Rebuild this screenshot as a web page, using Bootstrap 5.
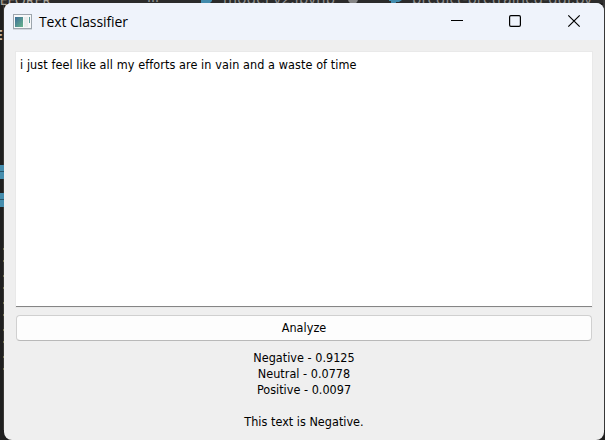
<!DOCTYPE html>
<html lang="en">
<head>
<meta charset="utf-8">
<title>Text Classifier</title>
<link href="https://cdn.jsdelivr.net/npm/bootstrap@5.3.0/dist/css/bootstrap.min.css" rel="stylesheet">
<style>
html,body{height:440px;overflow:hidden}
body{background:#1f1f1f;font-family:"DejaVu Sans Condensed","DejaVu Sans",sans-serif;font-stretch:condensed;font-size:12.5px;line-height:16px;color:#000}
.desk{height:440px;padding:3px 1px 0 4px}
.behind{inset:0;font-family:"Noto Sans",sans-serif;font-stretch:normal}
.behind svg{display:block}
.app-window{height:437px;background:#efefef;border-radius:8px}
.titlebar{height:37px;background:#eff3fb;padding-left:9px}
.title-text{font-family:"Open Sans","Noto Sans",sans-serif;font-stretch:normal;font-size:14px;line-height:20px;margin-left:7px;letter-spacing:-.1px}
.content-area{padding:12px 12px 0}
.entry{height:255px;background:#fff;box-shadow:0 0 0 1px #e9e9e9;border-bottom:1px solid #858585;padding:5px 4px;letter-spacing:.09px}
.analyze{height:26px;margin-top:8px;background:#fdfdfd;border:1px solid #d0d0d0;border-bottom-color:#b9b9b9;border-radius:4px;font-size:12.5px;line-height:16px;color:#000;letter-spacing:.05px}
.results{margin-top:9px;letter-spacing:.02px}
</style>
</head>
<body>
<div class="desk position-relative">
  <div class="behind position-absolute overflow-hidden">
    <svg width="605" height="440" viewBox="0 0 605 440" font-family="Noto Sans, sans-serif">
      <rect width="605" height="3" fill="#2b2b2b"/>
      <path d="M604 0v430" stroke="#383838" stroke-width="2"/>
      <path d="M3.5 0v430" stroke="#3a3835"/>
      <g fill="#8d8d8d" font-size="15">
        <text x="-9" y="5" font-size="14" fill="#aaa59b" textLength="60" lengthAdjust="spacingAndGlyphs">REFORER</text>
        <text x="223" y="4" textLength="112">model v2.ipynb</text>
        <text x="412" y="4" textLength="180">predict-pretrained-gui.py</text>
        <text x="147" y="2">...</text>
      </g>
      <text x="-5" y="40" font-size="14" font-weight="700" fill="#c8b8a8">E</text>
      <path d="M201 0h11v1l-2 2h-9z" fill="#428bac"/>
      <path d="M389 0h13l-3 2h-3v1h-5v-2h-2z" fill="#428bac"/>
      <circle cx="353" cy="-1" r="5" fill="#858585"/>
      <g fill="#468eae"><rect y="165" width="4" height="14"/><rect y="193" width="4" height="14"/></g>
      <path d="M0 171.500h4M0 199.500h4" stroke="#27566b"/>
      <path d="M3.500 248v126" stroke="#7a7858" stroke-dasharray="2 10 2 13"/>
    </svg>
  </div>
  <main class="app-window position-relative overflow-hidden d-flex flex-column">
    <header class="titlebar d-flex align-items-center">
      <svg width="19" height="16" viewBox="0 0 19 16" aria-hidden="true">
        <defs><linearGradient id="screen" x1="0" y1="0" x2="1" y2="1"><stop stop-color="#3c6c99"/><stop offset="1" stop-color="#68b58b"/></linearGradient></defs>
        <rect x=".5" y=".5" width="18" height="14" fill="#f7f8f9" stroke="#9da5ad"/>
        <path d="M0 15.500h19" stroke="#d3d8df"/>
        <rect x="2" y="3" width="8" height="10" fill="url(#screen)"/>
        <rect x="11" y="3" width="4" height="10" fill="#e9edec"/>
        <path d="M16.500 3v6" stroke="#5f9d9b"/>
      </svg>
      <div class="title-text">Text Classifier</div>
      <svg class="ms-auto flex-shrink-0" width="160" height="37" viewBox="0 0 160 37" fill="none" stroke="#000" aria-hidden="true">
        <path d="M7 17.500h12"/>
        <rect x="65.600" y="12.600" width="10.800" height="10.800" rx="1.300" stroke-width="1.200"/>
        <path d="M124.300 12.300l11.400 11.400M135.700 12.300l-11.400 11.400" stroke-width="1.200"/>
      </svg>
    </header>
    <section class="content-area d-flex flex-column">
      <div class="entry">i just feel like all my efforts are in vain and a waste of time</div>
      <button class="analyze btn w-100 p-0" type="button">Analyze</button>
      <div class="results text-center">Negative - 0.9125<br>Neutral - 0.0778<br>Positive - 0.0097<br><br>This text is Negative.</div>
    </section>
  </main>
</div>
</body>
</html>
